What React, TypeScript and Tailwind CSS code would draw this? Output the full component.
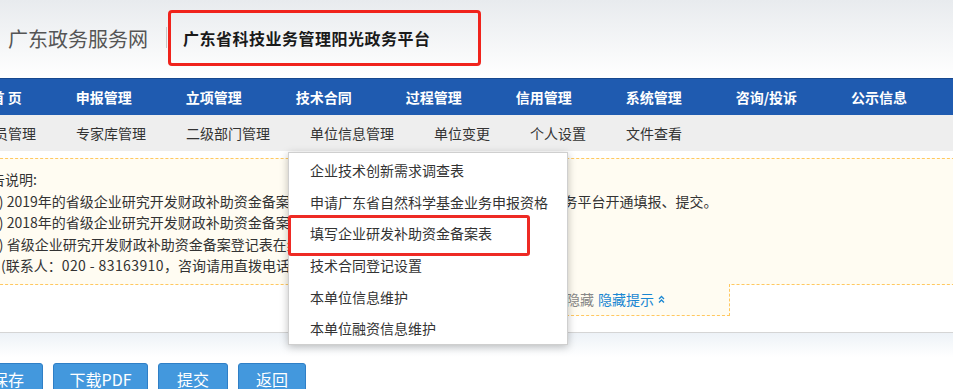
import React from "react";

const navItems = ["申报管理", "立项管理", "技术合同", "过程管理", "信用管理", "系统管理", "咨询/投诉", "公示信息"];
const subItems = ["专家库管理", "二级部门管理", "单位信息管理", "单位变更", "个人设置", "文件查看"];
const menuItems = [
  "企业技术创新需求调查表",
  "申请广东省自然科学基金业务申报资格",
  "填写企业研发补助资金备案表",
  "技术合同登记设置",
  "本单位信息维护",
  "本单位融资信息维护",
];

export default function App() {
  return (
    <div className="relative w-[953px] h-[389px] overflow-hidden bg-white font-['Noto_Sans_CJK_SC',sans-serif]">
      {/* header */}
      <div className="h-[78px] bg-gradient-to-b from-[#e8ebee] to-white flex items-center">
        <span className="ml-[8px] text-[20px] text-[#555] leading-none">广东政务服务网</span>
        <span className="ml-[18px] w-px h-[21px] bg-[#c8c8c8] mt-[-3px]" />
        <div className="ml-[1px] mt-[-2px] h-[56px] w-[313px] border-[3px] border-[#f0231c] rounded-[4px] flex items-center pl-[12px]">
          <span className="text-[16px] font-bold text-[#1a1a1a] tracking-[0.5px] leading-none">广东省科技业务管理阳光政务平台</span>
        </div>
      </div>
      {/* nav */}
      <div className="h-[37px] bg-[#1f5bb0] border-t border-[#17488f] flex items-center gap-[54px] text-white font-bold text-[14px] whitespace-nowrap">
        <span className="ml-[-9.5px]">首 页</span>
        {navItems.map((n) => (
          <span key={n}>{n}</span>
        ))}
      </div>
      {/* sub nav */}
      <div className="h-[36px] bg-[#eeeeee] flex items-center gap-[40px] text-[14px] text-[#333] whitespace-nowrap">
        <span className="ml-[-20px]">人员管理</span>
        {subItems.map((n) => (
          <span key={n}>{n}</span>
        ))}
      </div>
      {/* notice */}
      <div className="mt-[7px] ml-[-40px] w-[1040px] border border-dashed border-[#ffc860] bg-[#fffcf2] pt-[10px] pb-[7px] pl-[40px] text-[14px] text-[#333] leading-[21.5px] whitespace-nowrap">
        <div className="ml-[-24px]">公告说明:</div>
        <div className="ml-[-10px]">1) 2019年的省级企业研究开发财政补助资金备案登记表已于9月在广东省科技业务管理阳光政务平台开通填报、提交。</div>
        <div className="ml-[-10px]">2) 2018年的省级企业研究开发财政补助资金备案登记表已停止填报。</div>
        <div className="ml-[-10px]">3) 省级企业研究开发财政补助资金备案登记表在线填报后请及时提交。</div>
        <div>
          (联系人：<span className="tracking-[0.4px]">020 - 83163910</span>，咨询请用直拨电话，谢谢！)
        </div>
      </div>
      <div className="flex justify-end w-[730px]">
        <div className="mt-[-1px] w-[330px] h-[32px] bg-[#fffcf2] border border-t-0 border-dashed border-[#ffc860] flex items-center justify-end pr-[64px] text-[14px] whitespace-nowrap">
          <span className="text-[#888]">如不需要查看可点击隐藏</span>
          <span className="ml-[4px] text-[#1a87d2]">隐藏提示</span>
          <svg className="ml-[4px]" width="7" height="9" viewBox="0 0 7 9" fill="none" stroke="#1a87d2" strokeWidth="1.3">
            <path d="M1 4 L3.5 1.5 L6 4" />
            <path d="M1 7.5 L3.5 5 L6 7.5" />
          </svg>
        </div>
      </div>
      {/* buttons area */}
      <div className="mt-[16px] border-t border-[#d5d5d5] bg-[linear-gradient(#edf2f7,#ffffff_24px)] pt-[30px] flex gap-[10px] text-white text-[16px]">
        <button className="ml-[-27px] w-[70px] h-[32px] rounded-[3px] border border-[#2f7fc6] bg-[#4398dd]">保存</button>
        <button className="w-[95px] h-[32px] rounded-[3px] border border-[#2f7fc6] bg-[#4398dd]">下载PDF</button>
        <button className="w-[70px] h-[32px] rounded-[3px] border border-[#2f7fc6] bg-[#4398dd]">提交</button>
        <button className="w-[68px] h-[32px] rounded-[3px] border border-[#2f7fc6] bg-[#4398dd]">返回</button>
      </div>
      {/* dropdown menu */}
      <div className="absolute left-[288px] top-[152px] w-[280px] h-[193px] bg-white border border-[#cfcfcf] shadow-[0_2px_8px_rgba(0,0,0,0.25)] pt-[2px] text-[14px] text-[#333] whitespace-nowrap">
        {menuItems.map((m) => (
          <div key={m} className="h-[31.6px] flex items-center pl-[21px]">
            {m}
          </div>
        ))}
        <div className="absolute left-[-1px] top-[62px] w-[242px] h-[41px] border-[3px] border-[#ee2a24] rounded-[3px]" />
      </div>
    </div>
  );
}
